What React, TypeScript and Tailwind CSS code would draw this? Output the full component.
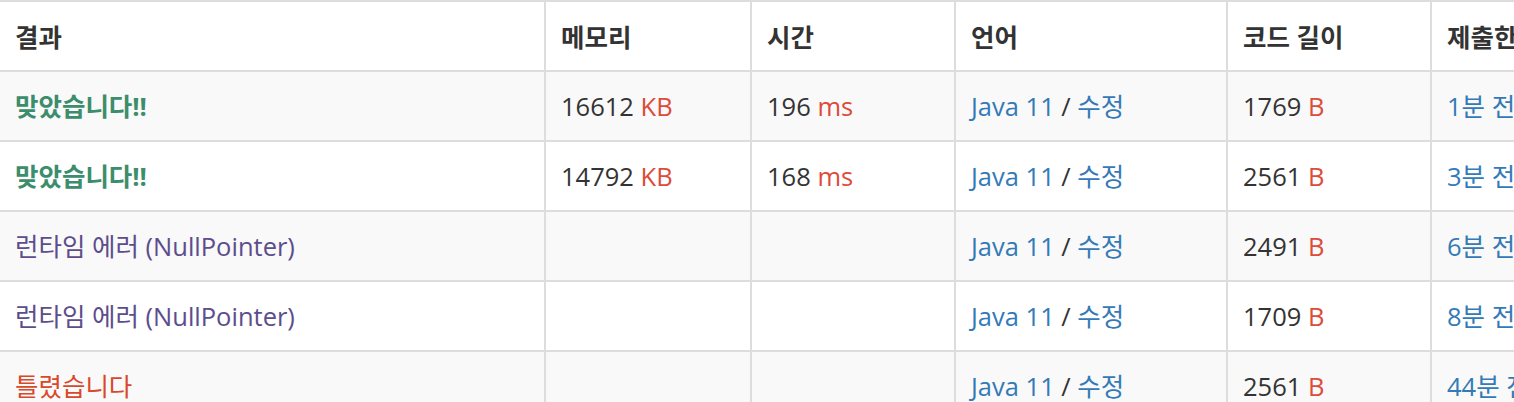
import React from 'react';

type Row = {
  result: string;
  kind: 'ac' | 'rte' | 'wa';
  memory?: string;
  time?: string;
  length: string;
  ago: string;
};

const rows: Row[] = [
  { result: '맞았습니다!!', kind: 'ac', memory: '16612', time: '196', length: '1769', ago: '1분 전' },
  { result: '맞았습니다!!', kind: 'ac', memory: '14792', time: '168', length: '2561', ago: '3분 전' },
  { result: '런타임 에러 (NullPointer)', kind: 'rte', length: '2491', ago: '6분 전' },
  { result: '런타임 에러 (NullPointer)', kind: 'rte', length: '1709', ago: '8분 전' },
  { result: '틀렸습니다', kind: 'wa', length: '2561', ago: '44분 전' },
];

const resultColor = {
  ac: 'text-[#3c8d6c] font-bold',
  rte: 'text-[#5c4d8c]',
  wa: 'text-[#d9482b]',
};

const cell = 'border-r-2 border-b-2 border-[#dddddd] px-[15px] text-left align-top whitespace-nowrap';
const td = `${cell} pt-[15px] pb-[15px]`;

const App: React.FC = () => {
  return (
    <div
      className="w-[1514px] h-[402px] overflow-hidden bg-white text-[#333333] text-[25.5px] leading-[38px]"
      style={{ fontFamily: '"Open Sans", "Noto Sans CJK KR", sans-serif' }}
    >
      <table className="border-separate border-spacing-0 table-fixed w-[1700px]">
        <colgroup>
          <col className="w-[546px]" />
          <col className="w-[206px]" />
          <col className="w-[204px]" />
          <col className="w-[272px]" />
          <col className="w-[204px]" />
          <col className="w-[268px]" />
        </colgroup>
        <thead>
          <tr className="bg-white">
            {['결과', '메모리', '시간', '언어', '코드 길이', '제출한 시간'].map((h) => (
              <th key={h} className={`${cell} border-t-2 font-bold pt-[16px] pb-[14px]`}>
                {h}
              </th>
            ))}
          </tr>
        </thead>
        <tbody>
          {rows.map((r, i) => (
            <tr key={i} className={i % 2 === 0 ? 'bg-[#f9f9f9]' : 'bg-white'}>
              <td className={td}>
                <span className={resultColor[r.kind]}>{r.result}</span>
              </td>
              <td className={td}>
                {r.memory && (
                  <>
                    {r.memory} <span className="text-[#dd4b39]">KB</span>
                  </>
                )}
              </td>
              <td className={td}>
                {r.time && (
                  <>
                    {r.time} <span className="text-[#dd4b39]">ms</span>
                  </>
                )}
              </td>
              <td className={td}>
                <a className="text-[#337ab7]">Java 11</a> / <a className="text-[#337ab7]">수정</a>
              </td>
              <td className={td}>
                {r.length} <span className="text-[#dd4b39]">B</span>
              </td>
              <td className={td}>
                <a className="text-[#337ab7]">{r.ago}</a>
              </td>
            </tr>
          ))}
        </tbody>
      </table>
    </div>
  );
};

export default App;
